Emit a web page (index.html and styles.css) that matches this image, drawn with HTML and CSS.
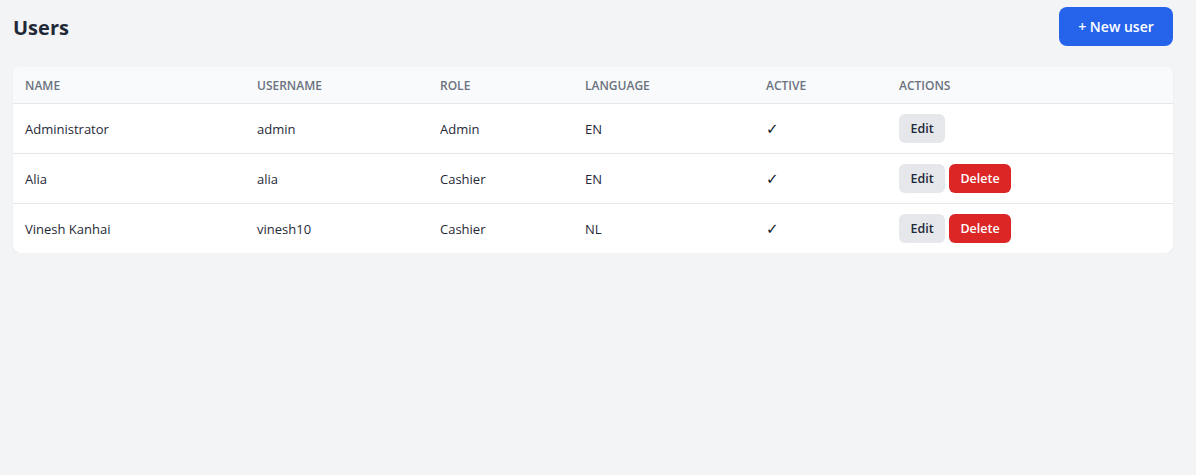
FILE: index.html
```html
<!DOCTYPE html>
<html>
<head>
    <title>Users</title>
    <link rel="stylesheet" href="styles.css">
</head>
<body>
    <div class="page">
        <div class="header">
            <h1>Users</h1>
            <button class="button button-primary">+ New user</button>
        </div>

        <div class="card">
            <table class="users">
                <colgroup>
                    <col class="col-name">
                    <col class="col-username">
                    <col class="col-role">
                    <col class="col-lang">
                    <col class="col-active">
                    <col>
                </colgroup>
                <thead>
                    <tr>
                        <th>Name</th>
                        <th>Username</th>
                        <th>Role</th>
                        <th>Language</th>
                        <th>Active</th>
                        <th>Actions</th>
                    </tr>
                </thead>
                <tbody>
                    <tr>
                        <td>Administrator</td>
                        <td>admin</td>
                        <td>Admin</td>
                        <td>EN</td>
                        <td class="check">✓</td>
                        <td><button class="button button-small">Edit</button></td>
                    </tr>
                    <tr>
                        <td>Alia</td>
                        <td>alia</td>
                        <td>Cashier</td>
                        <td>EN</td>
                        <td class="check">✓</td>
                        <td><button class="button button-small">Edit</button><button class="button button-small button-danger">Delete</button></td>
                    </tr>
                    <tr>
                        <td>Vinesh Kanhai</td>
                        <td>vinesh10</td>
                        <td>Cashier</td>
                        <td>NL</td>
                        <td class="check">✓</td>
                        <td><button class="button button-small">Edit</button><button class="button button-small button-danger">Delete</button></td>
                    </tr>
                </tbody>
            </table>
        </div>
    </div>
</body>
</html>
```

FILE: styles.css
```css
body {
    margin: 0;
    background: #f3f4f6;
    color: #111827;
    font-family: 'Open Sans', 'Noto Sans', sans-serif;
}
.page {
    padding: 7px 23px 0 13px;
}
.header {
    display: flex;
    align-items: center;
    justify-content: space-between;
    height: 39px;
    margin-bottom: 21px;
}
.header h1 {
    margin: 2px 0 0;
    font-size: 20px;
    font-weight: 700;
    color: #1f2937;
}
.button {
    font-family: inherit;
    border: none;
    cursor: pointer;
    font-weight: 600;
}
.button-primary {
    background: #2563eb;
    color: #fff;
    height: 39px;
    width: 114px;
    border-radius: 8px;
    font-size: 14px;
}
.button-small {
    background: #e5e7eb;
    color: #1f2937;
    height: 29px;
    width: 46px;
    padding: 0;
    border-radius: 6px;
    font-size: 12.5px;
    margin-right: 4px;
}
.button-danger {
    background: #dc2626;
    color: #fff;
    width: 62px;
}
.card {
    background: #fff;
    border-radius: 8px;
    box-shadow: 0 1px 2px rgba(0, 0, 0, 0.06);
    overflow: hidden;
}
.users {
    width: 100%;
    border-collapse: collapse;
}
.col-name { width: 232px; }
.col-username { width: 183px; }
.col-role { width: 145px; }
.col-lang { width: 181px; }
.col-active { width: 133px; }
.users th {
    background: #f9fafb;
    color: #6b7280;
    font-size: 12px;
    font-weight: 600;
    text-transform: uppercase;
    text-align: left;
    height: 36px;
    padding: 0 12px;
    border-bottom: 1px solid #e5e7eb;
}
.users td {
    font-size: 13px;
    color: #1f2937;
    height: 49px;
    padding: 0 12px;
    border-bottom: 1px solid #e5e7eb;
}
.users tbody tr:last-child td {
    border-bottom: none;
}
.users td.check {
    font-family: 'DejaVu Sans', sans-serif;
    font-size: 15px;
    font-weight: 700;
    color: #111827;
}
```
